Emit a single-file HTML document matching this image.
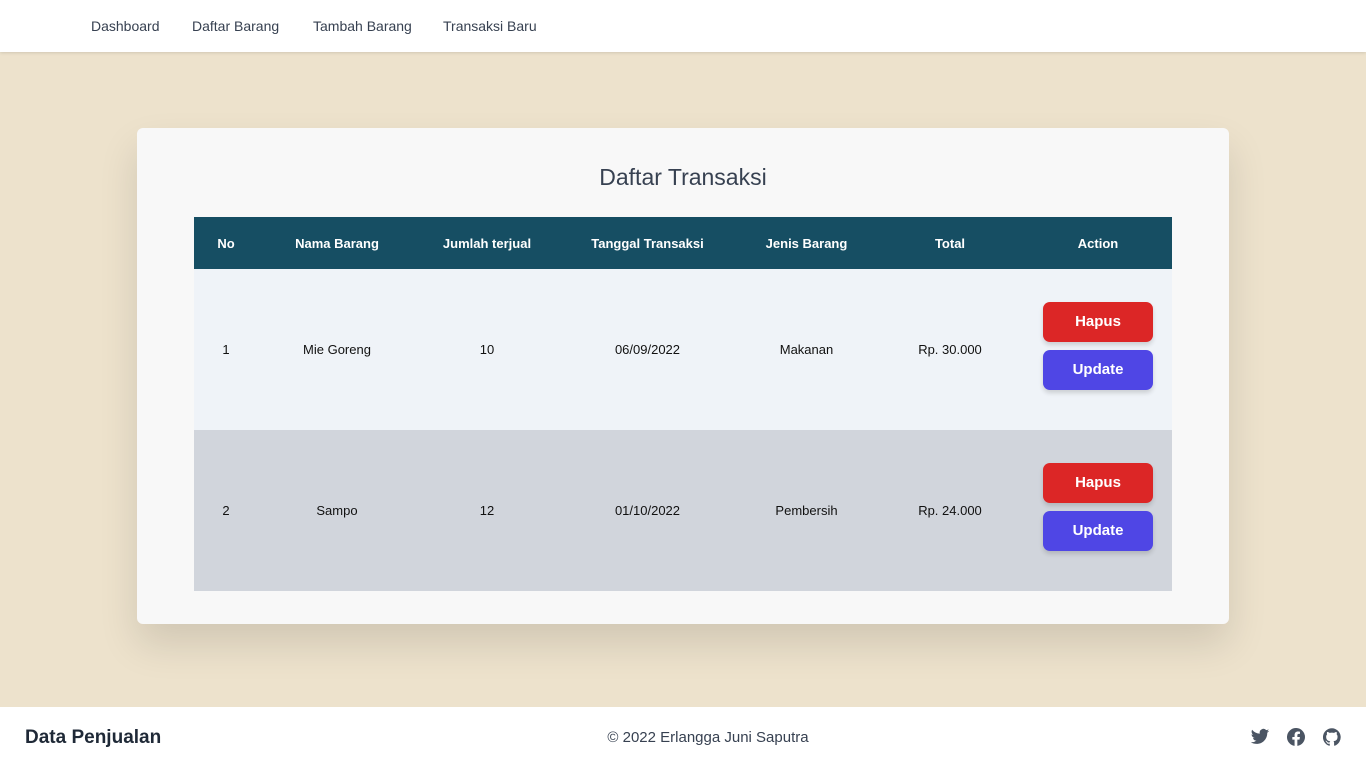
<!DOCTYPE html>
<html><head><meta charset="utf-8"><style>
*{box-sizing:border-box;margin:0;padding:0}
body{width:1366px;height:768px;background:#ede2cc;font-family:"Liberation Sans",sans-serif;position:relative;overflow:hidden;color:#111}
nav{position:absolute;top:0;left:0;width:1366px;height:52px;background:#fff;box-shadow:0 1px 3px rgba(0,0,0,.12)}
nav a{position:absolute;top:18px;font-size:14px;color:#374151;text-decoration:none}
.card{position:absolute;left:137px;top:128px;width:1092px;height:496px;background:#f8f8f8;border-radius:6px;box-shadow:0 20px 40px rgba(0,0,0,.12)}
h1{position:absolute;top:164px;left:0;width:1366px;text-align:center;font-size:23px;font-weight:normal;color:#374151}
table{position:absolute;left:194px;top:217px;width:978px;border-collapse:collapse;font-size:13px}
th{background:#164e63;color:#fff;height:52px;font-weight:bold}
td{text-align:center;height:161px}
tr.a td{background:#eff3f8}tr.b td{background:#d1d5dc}
.g{position:relative;top:-4px}
.btn{display:block;margin:0 auto;width:110px;height:40px;border-radius:7px;color:#fff;font-weight:bold;font-size:15px;line-height:40px;box-shadow:0 3px 5px rgba(0,0,0,.15)}
.r{background:#dc2626}.u{background:#4f46e5;margin-top:8px}
footer{position:absolute;left:0;top:707px;width:1366px;height:61px;background:#fff}
</style></head><body>
<nav><a style="left:91px">Dashboard</a><a style="left:192px">Daftar Barang</a><a style="left:313px">Tambah Barang</a><a style="left:443px">Transaksi Baru</a></nav>
<div class="card"></div>
<h1>Daftar Transaksi</h1>
<table>
<tr><th style="width:64px">No</th><th style="width:158px">Nama Barang</th><th style="width:142px">Jumlah terjual</th><th style="width:179px">Tanggal Transaksi</th><th style="width:139px">Jenis Barang</th><th style="width:148px">Total</th><th style="width:148px">Action</th></tr>
<tr class="a"><td>1</td><td>Mie Goreng</td><td>10</td><td>06/09/2022</td><td>Makanan</td><td>Rp. 30.000</td><td><div class="g"><span class="btn r">Hapus</span><span class="btn u">Update</span></div></td></tr>
<tr class="b"><td>2</td><td>Sampo</td><td>12</td><td>01/10/2022</td><td>Pembersih</td><td>Rp. 24.000</td><td><div class="g"><span class="btn r">Hapus</span><span class="btn u">Update</span></div></td></tr>
</table>
<footer>
<div style="position:absolute;left:25px;top:20px;font-size:19px;font-weight:bold;color:#1f2937">Data Penjualan</div>
<div style="position:absolute;left:0;width:1416px;text-align:center;top:22px;font-size:15px;color:#374151">© 2022 Erlangga Juni Saputra</div>
<svg style="position:absolute;left:1250px;top:20px" width="20" height="20" viewBox="0 0 24 24" fill="#4b5563"><path d="M23 4.5a9 9 0 0 1-2.6.7 4.5 4.5 0 0 0 2-2.5 9 9 0 0 1-2.9 1.1A4.5 4.5 0 0 0 11.8 8 12.8 12.8 0 0 1 2.5 3.3a4.5 4.5 0 0 0 1.4 6 4.5 4.5 0 0 1-2-.6 4.5 4.5 0 0 0 3.6 4.5 4.5 4.5 0 0 1-2 .1 4.5 4.5 0 0 0 4.2 3.1A9 9 0 0 1 1 18.3 12.8 12.8 0 0 0 7.9 20.3c8.3 0 12.8-6.9 12.8-12.8v-.6A9 9 0 0 0 23 4.5z"/></svg>
<svg style="position:absolute;left:1287px;top:21px" width="18" height="18" viewBox="0 0 24 24" fill="#4b5563"><path d="M24 12a12 12 0 1 0-13.9 11.9v-8.4H7.1V12h3V9.4c0-3 1.8-4.7 4.5-4.7 1.3 0 2.7.2 2.7.2v3h-1.5c-1.5 0-2 .9-2 1.9V12h3.4l-.5 3.5h-2.9v8.4A12 12 0 0 0 24 12z"/></svg>
<svg style="position:absolute;left:1323px;top:21px" width="18" height="18" viewBox="0 0 24 24" fill="#4b5563"><path d="M12 .3a12 12 0 0 0-3.8 23.4c.6.1.8-.3.8-.6v-2.2c-3.3.7-4-1.4-4-1.4-.6-1.4-1.4-1.8-1.4-1.8-1-.7.1-.7.1-.7 1.200.1 1.8 1.2 1.8 1.2 1 1.8 2.8 1.3 3.500 1 0-.8.4-1.3.7-1.6-2.7-.3-5.5-1.3-5.5-6 0-1.2.5-2.3 1.3-3.1-.2-.4-.6-1.6 0-3.2 0 0 1-.3 3.3 1.2a11.5 11.5 0 0 1 6 0c2.3-1.5 3.3-1.2 3.3-1.2.6 1.6.2 2.8.1 3.2.8.8 1.2 1.9 1.2 3.1 0 4.6-2.8 5.6-5.5 5.9.5.4.9 1.1.9 2.2v3.3c0 .3.1.7.8.6A12 12 0 0 0 12 .3"/></svg>
</footer>
</body></html>
